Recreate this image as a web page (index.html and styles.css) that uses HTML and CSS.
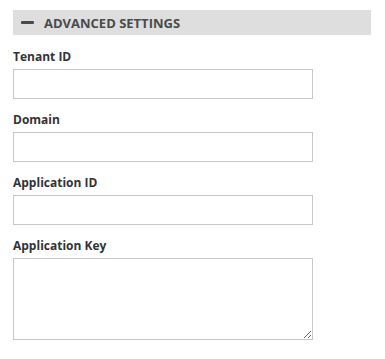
FILE: index.html
```html
<!DOCTYPE html>
<html lang="en">
<head>
  <meta charset="UTF-8">
  <title>Advanced Settings</title>
  <link rel="stylesheet" href="styles.css">
</head>
<body>
  <section class="settings">
    <!-- collapsible header -->
    <div class="settings-header">
      <span class="toggle-icon"></span>
      <span class="settings-title">Advanced Settings</span>
    </div>
    <div class="settings-body">
      <div class="field">
        <label for="tenantId">Tenant ID</label>
        <input type="text" id="tenantId">
      </div>
      <div class="field">
        <label for="domain">Domain</label>
        <input type="text" id="domain">
      </div>
      <div class="field">
        <label for="appId">Application ID</label>
        <input type="text" id="appId">
      </div>
      <div class="field">
        <label for="appKey">Application Key</label>
        <textarea id="appKey"></textarea>
      </div>
    </div>
  </section>
</body>
</html>
```

FILE: styles.css
```css
* { margin: 0; padding: 0; box-sizing: border-box; }
body {
  font-family: "Open Sans", "Liberation Sans", sans-serif;
  background: #fff;
  color: #333;
}
.settings {
  padding: 10px 14px 0 13px;
}
/* header bar */
.settings-header {
  display: flex;
  align-items: center;
  height: 25px;
  background: #dedede;
  padding-left: 8px;
}
.toggle-icon {
  width: 13px;
  height: 3px;
  background: #4a4a4a;
  border-radius: 1px;
  margin-right: 10px;
}
.settings-title {
  font-size: 13px;
  font-weight: 700;
  text-transform: uppercase;
  color: #4a4a4a;
}
/* form */
.settings-body {
  padding-top: 13px;
}
.field {
  margin-bottom: 12px;
}
.field label {
  display: block;
  font-size: 12px;
  font-weight: 700;
  color: #333;
  line-height: 17px;
  margin-bottom: 4px;
}
.field input,
.field textarea {
  display: block;
  width: 300px;
  height: 30px;
  border: 1px solid #c8c8c8;
  background: #fff;
  font-family: inherit;
  font-size: 12px;
  padding: 4px 6px;
}
.field textarea {
  height: 82px;
  resize: vertical;
}
```
